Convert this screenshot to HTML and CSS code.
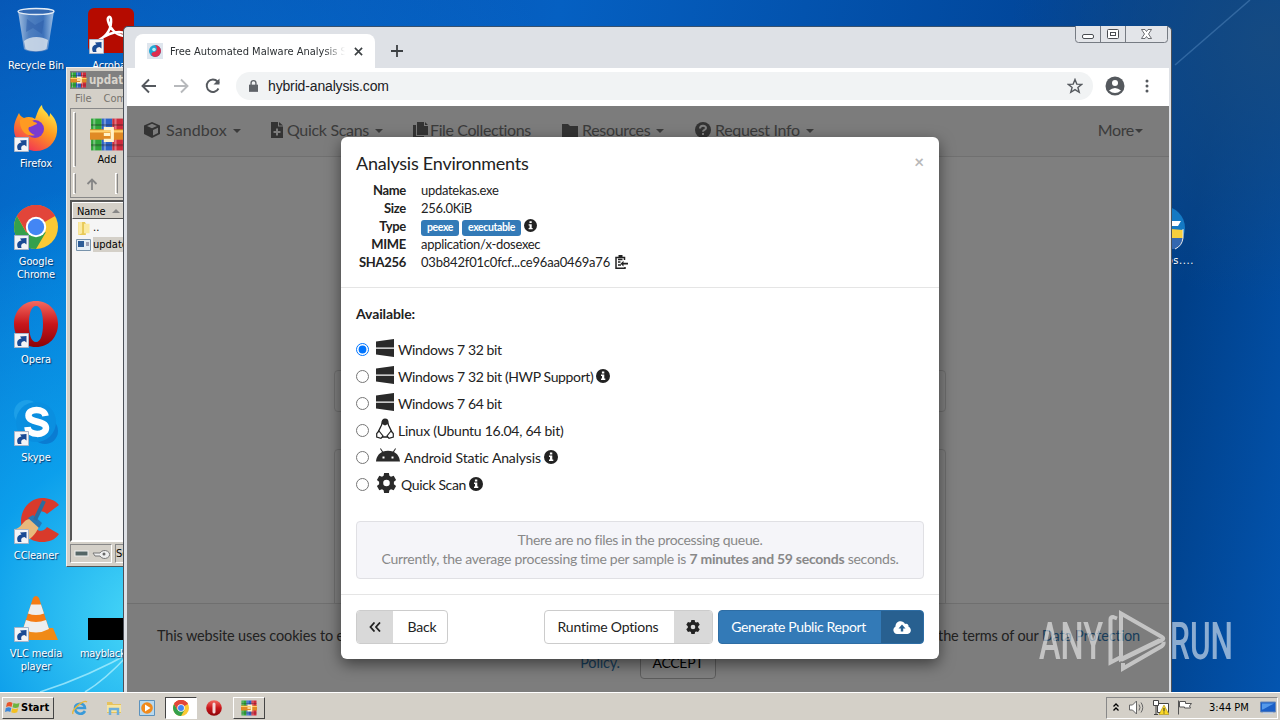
FILE: index.html
```html
<!DOCTYPE html>
<html lang="en">
<head>
  <meta charset="utf-8">
  <title>Free Automated Malware Analysis Service</title>
  <link rel="stylesheet" href="styles.css">
</head>
<body>
  <!-- shared icons -->
  <svg class="defs" width="0" height="0">
    <defs>
      <linearGradient id="g-fire" x1="0.8" y1="0" x2="0.2" y2="1"><stop offset="0" stop-color="#fff04a"/><stop offset=".45" stop-color="#ff9a1f"/><stop offset="1" stop-color="#f0265c"/></linearGradient>
      <linearGradient id="g-red" x1="0" y1="0" x2="0" y2="1"><stop offset="0" stop-color="#f46a60"/><stop offset=".5" stop-color="#c8161b"/><stop offset="1" stop-color="#8b0308"/></linearGradient>
      <linearGradient id="g-glass" x1="0" y1="0" x2="1" y2="0"><stop offset="0" stop-color="#bcd0e8"/><stop offset=".3" stop-color="#5d86c0"/><stop offset=".7" stop-color="#4776ba"/><stop offset="1" stop-color="#b8d2ee"/></linearGradient>
    </defs>
    <symbol id="shortcut" viewBox="0 0 15 15"><path fill="#f4f4f6" stroke="#a8b4c8" d="M.5.5h14v14H.5z"/><path fill="#1a4a94" d="M4 13C2 8.500 4 6 7.500 5.500L6 3.500 12.500 3v6.500L10.500 8C7.500 8.500 6.500 10 7.500 13z"/></symbol>
    <symbol id="windows" viewBox="0 0 18 18"><path d="M0 2.400 18 0v8.500H0zM0 9.700h18V18L0 15.600z"/></symbol>
    <symbol id="info" viewBox="0 0 14 14"><circle cx="7" cy="7" r="7"/><path fill="#fff" d="M5.900 2.400h2.400v2H5.900zM5 5.600h3.300v4h1v1.500H5V9.600h1V7H5z"/></symbol>
    <symbol id="gear" viewBox="0 0 20 20"><path fill-rule="evenodd" d="M7.600 0h4.800l.5 2.800 1.600.9L17.200 2.700l2.400 4.200-2.200 1.900v2.400l2.200 1.900-2.400 4.200-2.700-1-1.600.9-.5 2.800H7.600l-.5-2.800-1.600-.9-2.700 1-2.400-4.200 2.200-1.900V8.800L.4 6.900l2.400-4.200 2.700 1 1.600-.9zM10 6.700a3.300 3.300 0 1 0 0 6.600 3.300 3.300 0 0 0 0-6.600z"/></symbol>
    <symbol id="rar" viewBox="0 0 32 32"><path fill="#2fa53a" d="M1 1h10v30H1z"/><path fill="#2d63c8" d="M11 1h10v30H11z"/><path fill="#cf2a3c" d="M21 1h10v30H21z"/><path fill="#fff" opacity=".35" d="M3 1h2v30H3zM13 1h2v30h-2zM23 1h2v30h-2z"/><path fill="#222" opacity=".3" d="M1 6h30v2H1zM1 25h30v2H1z"/><path fill="#e08a25" d="M0 11h32v10H0z"/><path fill="#ffd06b" d="M0 12h32v2H0z"/><path fill="none" stroke="#fff2c8" stroke-width="3" d="M13 10.500h8v11h-8M13 16h6"/></symbol>
    <symbol id="chrome" viewBox="0 0 44 44"><circle cx="22" cy="22" r="22" fill="#fbc934"/><path fill="#e2453a" d="M22 22 3 11a22 22 0 0 1 38 0z"/><path fill="#34a04c" d="M3 11a22 22 0 0 0 19 33l10-17-10 4-10-4z"/><path fill="#e2453a" d="M3 11 12.500 27.500 22 11h19A22 22 0 0 0 3 11z"/><circle cx="22" cy="22" r="10.200" fill="#fff"/><circle cx="22" cy="22" r="8.200" fill="#4386f4"/></symbol>
    <symbol id="opera" viewBox="0 0 44 46"><path fill="url(#g-red)" fill-rule="evenodd" d="M22 0C9 0 0 10 0 23s9 23 22 23 22-10 22-23S35 0 22 0zm0 5c5 0 7 8 7 18s-2 18-7 18-7-8-7-18 2-18 7-18z"/></symbol>
  </svg>

  <div class="desktop">
    <svg class="rays" viewBox="0 0 1280 692">
      <path d="M40 692Q90 676 135 650M85 692Q105 680 128 655" stroke="#b9f3ff" stroke-width="1.500" opacity=".7"/>
      <path d="M1175 65 1250 0" stroke="#6fa2d8" stroke-width="1.500" opacity=".35"/>
    </svg>

    <div class="icons">
      <div class="icon">
        <svg viewBox="0 0 46 46"><path fill="url(#g-glass)" opacity=".85" d="M5 4h36l-6 38c-4 4-20 4-24 0z"/><path fill="#dfe6ee" opacity=".8" d="M11 34c6-5 17-5 24-1l-1.500 9c-5 3-16 3-21 0z"/><path fill="#2c5ca8" opacity=".5" d="M14 12l8 6 9-5-2 14-9-6-7 4z"/><ellipse cx="23" cy="4.500" rx="18" ry="3" fill="#3469b2" stroke="#e3ecf6" stroke-width="1.300"/></svg>
        <span>Recycle Bin</span>
      </div>
      <div class="icon">
        <svg viewBox="0 0 46 46"><path fill="url(#g-fire)" d="M1 24C1 17 4 12 6 8c1 3 3 4 5 5 4-2 9-1 11 1 2-4 3-11 7-14 0 5 5 6 7 12 1-1 1-3 1-4 5 5 8 11 7 19-1 11-10 19-21 19S1 36 1 24z"/><circle cx="22" cy="24" r="9" fill="#7a3bd0"/><path fill="#ff9a22" d="M7 15c5-3 11-2 14 2 2 0 3 1 3 2-4 1-5 3-8 3-2 3 2 7 6 8-9 3-16-6-15-15z"/></svg>
        <svg class="arrow"><use href="#shortcut"/></svg>
        <span>Firefox</span>
      </div>
      <div class="icon">
        <svg><use href="#chrome" x="1" y="2" width="44" height="44"/></svg>
        <svg class="arrow"><use href="#shortcut"/></svg>
        <span>Google Chrome</span>
      </div>
      <div class="icon">
        <svg><use href="#opera" x="1" width="44" height="46"/></svg>
        <svg class="arrow"><use href="#shortcut"/></svg>
        <span>Opera</span>
      </div>
      <div class="icon">
        <svg viewBox="0 0 46 46"><circle cx="14" cy="14" r="13" fill="#1c9fe8"/><circle cx="32" cy="32" r="13" fill="#0a7cd2"/><circle cx="23" cy="23" r="20" fill="#0a8fe0"/><path fill="none" stroke="#fff" stroke-width="6.500" d="M32.500 17c-1-8-17-8-17-.5 0 8 17.500 4.500 17.500 12.500 0 8-18 8-18.500-1"/></svg>
        <svg class="arrow"><use href="#shortcut"/></svg>
        <span>Skype</span>
      </div>
      <div class="icon">
        <svg viewBox="0 0 46 46"><path fill="#d93a2b" d="M46 8 34 17c-6-6-13-2-13 7 0 10 8 13 13 6l12 7c-4 6-10 8-17 8C16 45 8 36 8 24S17 1 29 1c7 0 13 2 17 7z"/><path fill="#e8b97c" d="M1 32c8 0 9-11 17-10l8 8c-4 8-9 13-15 15z"/><path fill="#2877b3" d="M15 21l5-3 9 8-3 5z"/><path stroke="#2b6c9e" stroke-width="4" d="M22 23 31 4"/></svg>
        <svg class="arrow"><use href="#shortcut"/></svg>
        <span>CCleaner</span>
      </div>
      <div class="icon">
        <svg viewBox="0 0 46 46"><path fill="#f08a17" d="M8 33h32l5 12H4z"/><path fill="#f57c14" d="M20 3q3-4 6 0l10 31q-13 7-26 0z"/><path fill="#eee" d="M18 9.500h10l3 9q-8 3-16 0zM13 25q10 4 20 0l3 9q-13 7-26 0z"/></svg>
        <svg class="arrow"><use href="#shortcut"/></svg>
        <span>VLC media player</span>
      </div>
    </div>

    <div class="icons second">
      <div class="icon">
        <svg viewBox="0 0 46 46"><rect y="1" width="46" height="45" rx="6" fill="#b50b00"/><path fill="none" stroke="#fff" stroke-width="2.500" d="M11 33c8-4 13-12 12-21-1-4-4-2-3 2 2 8 8 14 16 15 4-1 0-4-5-4-7 0-13 3-20 8z"/></svg>
        <svg class="arrow"><use href="#shortcut"/></svg>
        <span>Acrobat</span>
      </div>
      <div class="icon last">
        <div class="thumb"></div>
        <span>mayblack...</span>
      </div>
    </div>

    <div class="icon side">
      <svg viewBox="0 0 46 46"><circle cx="23" cy="23" r="22" fill="#1479c4"/><path fill="#fff" d="M30 16h11l-3 5h-8z"/><path fill="#f7cf3d" d="M31 24l12 1v8H31z"/><path fill="#3568b0" d="M31 33h12q-1 8-7 11h-5z"/><path fill="none" stroke="#e8e8e8" d="M43 24v9q-1 8-8 11"/></svg>
      <span>setups....</span>
    </div>

    <!-- archive window -->
    <div class="rar-window">
      <div class="rar-title"><svg><use href="#rar"/></svg><b>updatekas.zip</b></div>
      <div class="rar-menu"><span>File</span><span>Commands</span></div>
      <div class="rar-tools">
        <i class="grip"></i>
        <div class="rar-add"><svg><use href="#rar"/></svg><span>Add</span></div>
      </div>
      <div class="rar-nav">
        <i class="grip"></i>
        <svg viewBox="0 0 12 12"><path d="M6 12V1.500M1.500 6 6 1.500 10.500 6"/></svg>
        <i class="grip"></i>
      </div>
      <div class="rar-list">
        <div class="rar-head">Name <i></i></div>
        <div class="rar-row"><svg viewBox="0 0 15 15"><path fill="#e8c956" d="M2 1h7l1 2v12H2z"/><path fill="#faeaa2" d="M2 1h4v12l-4 2zM8 3h6v10H8z"/></svg><span>..</span></div>
        <div class="rar-row"><svg viewBox="0 0 15 12"><path fill="#e4edf5" stroke="#7893ab" d="M.5.500h14v11H.5z"/><path fill="#2d5d98" d="M2 2h6v6H2z"/><path stroke="#557" d="M10 4h3M10 6h3"/></svg><span class="picked">updatekas.exe</span></div>
      </div>
      <div class="rar-status">
        <div class="cell"><svg viewBox="0 0 36 12"><rect x="1" y="3" width="13" height="5" fill="#566" stroke="#eee"/><path fill="#eee" stroke="#777" d="M19 5h7a5 4 0 1 1 0 3h-5z"/><circle cx="30" cy="6" r="1.500" fill="#666"/></svg></div>
        <div class="cell text">Selected</div>
      </div>
    </div>

    <!-- browser window -->
    <div class="browser">
      <div class="win-buttons">
        <svg viewBox="0 0 93 17"><path fill="#e3e5e9" stroke="#767b83" d="M.5 0v13.500q0 3 3 3h86q3 0 3-3V0M25.500 0v16.500M50.500 0v16.500"/><rect x="7.500" y="8.500" width="11" height="4" rx="1.500" fill="#fff" stroke="#4a4d52"/><rect x="32.500" y="3.500" width="11" height="9" rx="1" fill="#fff" stroke="#4a4d52"/><rect x="35.500" y="6.500" width="5" height="3" fill="#fff" stroke="#4a4d52"/><path fill="#fff" stroke="#4a4d52" stroke-width=".8" d="M66.500 3.500h3.500l1.500 2 1.500-2h3.500L73.500 8l3 4.500H73l-1.500-2-1.500 2h-3.500l3-4.500z"/></svg>
      </div>
      <div class="tabs">
        <div class="tab">
          <svg class="favicon" viewBox="0 0 16 16"><path fill="#dfe6ee" d="M0 0h16v16H0z"/><circle cx="8" cy="8" r="6" fill="#21a7d4"/><path fill="#df2c4e" d="M8 2a6 6 0 0 1 0 12C3 13 4 9 7 9s4-4 1-7z"/><circle cx="7" cy="6.500" r="1.800" fill="#b8eef8"/></svg>
          <span>Free Automated Malware Analysis Service</span>
          <svg class="close" viewBox="0 0 10 10"><path d="m1 1 8 8M9 1 1 9"/></svg>
        </div>
        <svg class="plus" viewBox="0 0 12 12"><path d="M6 0v12M0 6h12"/></svg>
      </div>
      <div class="toolbar">
        <svg class="nav-icon" viewBox="0 0 16 16"><path d="M15 8H2M8 1.500 1.500 8 8 14.500"/></svg>
        <svg class="nav-icon off" viewBox="0 0 16 16"><path d="M1 8h13M8 1.500 14.500 8 8 14.500"/></svg>
        <svg class="nav-icon" viewBox="0 0 16 16"><path d="M13.500 10.500A6.200 6.200 0 1 1 12.500 3.500L14 5"/><path d="M14.500.500v6h-6z" class="solid"/></svg>
        <div class="address">
          <svg class="lock" viewBox="0 0 10 13"><path d="M0 5h10v8H0z"/><path fill="none" stroke="#5f6368" stroke-width="1.500" d="M2.300 5.500V3.300a2.700 2.700 0 0 1 5.400 0v2.200"/></svg>
          <span>hybrid-analysis.com</span>
          <svg class="star" viewBox="0 0 16 16"><path d="m8 1.500 1.800 4.600 4.900.300-3.800 3.100 1.300 4.800L8 11.600l-4.200 2.700 1.300-4.800-3.800-3.100 4.900-.300z"/></svg>
        </div>
        <svg class="user" viewBox="0 0 20 20"><circle cx="10" cy="10" r="9.500"/><circle cx="10" cy="7" r="3" fill="#fff"/><path fill="#fff" d="M4 14.500q6-5 12 0-6 5-12 0z"/></svg>
        <svg class="dots" viewBox="0 0 4 14"><circle cx="2" cy="2" r="1.500"/><circle cx="2" cy="7" r="1.500"/><circle cx="2" cy="12" r="1.500"/></svg>
      </div>

      <div class="page">
        <div class="navbar">
          <div class="nav-item sandbox"><svg viewBox="0 0 16 16"><path fill-rule="evenodd" d="m8 0 8 3.500v8.500l-8 4-8-4V3.500zM8 1.800 3 4l5 2.200L13 4zM9 8v5.600l5-2.500V5.700z"/></svg><span>Sandbox</span><i></i></div>
          <div class="nav-item scans"><svg viewBox="0 0 12 16"><path fill-rule="evenodd" d="M0 0h7v4.500h5V16H0zM8 0l4 3.500H8zM5 6.500V9H2.500v2H5v2.500h2V11h2.500V9H7V6.500z"/></svg><span>Quick Scans</span><i></i></div>
          <div class="nav-item files"><svg viewBox="0 0 15 16"><path d="M4 0h7v4h4v9H4zM12 0l3 3h-3zM0 3h3v11h8v2H0z"/></svg><span>File Collections</span></div>
          <div class="nav-item resources"><svg viewBox="0 0 16 14"><path d="M0 1h6l2 2h8v11H0z"/></svg><span>Resources</span><i></i></div>
          <div class="nav-item request"><svg viewBox="0 0 16 16"><circle cx="8" cy="8" r="8"/><path fill="none" stroke="#fff" stroke-width="2" d="M5 6.500c0-3.500 6-3.500 6-.5 0 2-3 1.700-3 3.700M8 11v2"/></svg><span>Request Info</span><i></i></div>
          <div class="nav-item more"><span>More</span><i></i></div>
        </div>
        <div class="content">
          <div class="panel small"></div>
          <div class="panel"></div>
        </div>
        <div class="cookies">
          <div class="cookie-text"><span>This website uses cookies to enhance your browsing experience.</span><span class="terms">the terms of our <a>Data Protection</a></span></div>
          <div class="cookie-action"><a>Policy.</a><button>ACCEPT</button></div>
        </div>

        <div class="backdrop">
          <div class="modal">
            <div class="modal-header">
              <div class="title-row"><h4>Analysis Environments</h4><span class="x">×</span></div>
              <dl>
                <dt>Name</dt><dd>updatekas.exe</dd>
                <dt>Size</dt><dd>256.0KiB</dd>
                <dt>Type</dt><dd><span class="label">peexe</span><span class="label">executable</span><svg class="info"><use href="#info"/></svg></dd>
                <dt>MIME</dt><dd>application/x-dosexec</dd>
                <dt>SHA256</dt><dd class="hash">03b842f01c0fcf...ce96aa0469a76 <svg class="clip" viewBox="0 0 13 14"><path fill="none" stroke="#222" stroke-width="1.500" d="M9.500 5V2.500H1v10.700h9V12M3 4.500h4.500M3 7h2.500M3 10h3"/><path fill="#222" d="M3.500 0h4v3h-4zM13 7.800v1.700H8.500v2L5.500 8.700l3-2.900v2z"/></svg></dd>
              </dl>
            </div>
            <div class="modal-body">
              <b class="available">Available:</b>
              <label><input type="radio" name="env" checked><svg class="win"><use href="#windows"/></svg><span>Windows 7 32 bit</span></label>
              <label><input type="radio" name="env"><svg class="win"><use href="#windows"/></svg><span>Windows 7 32 bit (HWP Support)</span><svg class="info"><use href="#info"/></svg></label>
              <label><input type="radio" name="env"><svg class="win"><use href="#windows"/></svg><span>Windows 7 64 bit</span></label>
              <label class="linux"><input type="radio" name="env"><svg class="win tux" viewBox="0 0 18 21"><path fill="#fff" stroke="#222" stroke-width="1.300" d="M6 5c0-5 6-5 6 0 0 4 4 6 4 11l-3 3H5l-3-3c0-5 4-7 4-11z"/><path d="M6 3.500C6 .5 12 .5 12 3.500V6L9 7.500 6 6z"/><path fill="#fff" stroke="#222" stroke-width="1.200" d="m3 13 4 5-2 2.300-4.300-1.200V15.500zM15 13l-4 5 2 2.300 4.300-1.200V15.500z"/></svg><span>Linux (Ubuntu 16.04, 64 bit)</span></label>
              <label class="android"><input type="radio" name="env"><svg class="droid" viewBox="0 0 24 14"><path fill-rule="evenodd" d="M0 13.500C.5 8.500 3 5.500 6 4L4 .7l.8-.5 2.200 3.400q5-1.800 10 0L19.200.2l.8.5L18 4c3 1.500 5.500 4.500 6 9.500zM6.500 8.500v2h2v-2zM15.500 8.500v2h2v-2z"/></svg><span>Android Static Analysis</span><svg class="info"><use href="#info"/></svg></label>
              <label><input type="radio" name="env"><svg class="cog"><use href="#gear"/></svg><span>Quick Scan</span><svg class="info"><use href="#info"/></svg></label>
              <div class="well">
                <p>There are no files in the processing queue.</p>
                <p>Currently, the average processing time per sample is <b>7 minutes and 59 seconds</b> seconds.</p>
              </div>
            </div>
            <div class="modal-footer">
              <div class="btn back"><i><svg viewBox="0 0 12 10"><path d="M5.500.500 1.500 5l4 4.500M11 .5 7 5l4 4.500"/></svg></i><span>Back</span></div>
              <div class="btn options"><span>Runtime Options</span><i><svg><use href="#gear"/></svg></i></div>
              <div class="btn primary"><span>Generate Public Report</span><i><svg viewBox="0 0 18 13"><path fill-rule="evenodd" d="M4 13a4 4 0 0 1-1.500-7.500C2.500-.5 10-1.500 12 3c2-1 4 .5 3.500 2.700C19 7 18.500 13 14.500 13zM9 3.500l-3.500 4h2.300v3h2.400v-3h2.300z"/></svg></i></div>
            </div>
          </div>
        </div>
      </div>
    </div>
  </div>

  <div class="taskbar">
    <div class="start"><svg viewBox="0 0 15 15"><path fill="#e8552b" d="M2 3q3-2 5.500 0L6.500 7Q4 5.500 1 7z"/><path fill="#6eb43f" d="M8.500 3q3 1.500 6 0l-1 4.200q-3 1.500-6 0z"/><path fill="#3a86d8" d="M.8 8q3-1.500 5.500 0l-1 4Q3 10.500 0 12z"/><path fill="#f3c021" d="M7.200 8.200q3 1.500 6 0l-1 4q-3 1.500-6 0z"/></svg><b>Start</b></div>
    <div class="task"><svg viewBox="0 0 16 16"><path fill="none" stroke="#3a9ad9" stroke-width="2.600" d="M13 11c-3 5-10 2.500-10-3S13 2 13 8H4"/><path fill="none" stroke="#e8b73a" stroke-width="1.400" d="M1 14C-1 10 12-1 15 2"/></svg></div>
    <div class="task"><svg viewBox="0 0 16 16"><path fill="#e6c25c" d="M1 2h5l1 2h8v9H1z"/><path fill="#f8e6a0" d="M1 5h14v7H1z"/><path fill="none" stroke="#6daedb" stroke-width="2.500" d="M4 15V9h8v6"/></svg></div>
    <div class="task"><svg viewBox="0 0 16 16"><path fill="#b9d9ee" stroke="#5c92bd" d="M.5.500h15v15H.5z"/><circle cx="8" cy="8" r="5.800" fill="#f18a1c"/><path fill="#fff" d="m6 4.500 5.500 3.500L6 11.500z"/></svg></div>
    <div class="task active"><svg><use href="#chrome"/></svg></div>
    <div class="task"><svg viewBox="0 0 16 16"><circle cx="8" cy="8" r="7.800" fill="url(#g-red)"/><rect x="6.500" y="2.500" width="3" height="11" rx="1.500" fill="#f4d8d8"/></svg></div>
    <div class="task raised"><svg><use href="#rar"/></svg></div>
    <div class="tray">
      <svg class="chev" viewBox="0 0 6 9"><path d="M.5 3.500 3 1l2.500 2.500M.5 7.500 3 5l2.500 2.500"/></svg>
      <svg viewBox="0 0 16 14"><path fill="#fff" stroke="#666" d="M.5 4.500h3l4-4v13l-4-4h-3z"/><path fill="none" stroke="#666" d="M10 4q2 3 0 6M12 2q3.500 5 0 10"/></svg>
      <svg viewBox="0 0 16 15"><path fill="#fff" stroke="#444" d="M4.500 3.500h11v9h-11z"/><path fill="#fff" stroke="#444" d="M.5.500h5v5h-5zM3 5.500v9M1 14.500h4"/><path fill="#fbd825" stroke="#a68b10" stroke-width=".6" d="m11 5 5 9.500H6z"/><path stroke="#222" d="M11 8v3.500M11 12.500v1"/></svg>
      <svg viewBox="0 0 16 15"><path fill="#fff" stroke="#555" d="M1.500 14.500V.500M2.500 1.500h6v2h6l-2 2.500 1 2h-6v-1h-5z"/></svg>
      <span>3:44 PM</span>
      <svg viewBox="0 0 16 14"><path fill="#1b5fc6" stroke="#6888b8" d="M.5 1.500h15v10H.5z"/><path fill="#5599ea" d="M2 3h12L3 9H2z"/><path fill="#c9d4e2" d="M3 12h10v1.500H3z"/></svg>
    </div>
  </div>

  <svg class="watermark" viewBox="0 0 192 62">
    <text x="0" y="49" textLength="64" lengthAdjust="spacingAndGlyphs">ANY</text>
    <path d="M78 8.500 74 7q-2.500 0-2.500 2.500v43L84 46M82 42V3.500l41 23.500q2.500 1.500 0 3L82 50M82 15v34L121 30M84 53v5.500l39-22.500q2-1.500 1.500-4"/>
    <text x="131" y="49" textLength="63" lengthAdjust="spacingAndGlyphs">RUN</text>
  </svg>
</body>
</html>
```
FILE: styles.css
```css
* {
  box-sizing: border-box;
}

body {
  margin: 0;
  width: 1280px;
  height: 720px;
  overflow: hidden;
  font-family: "DejaVu Sans Condensed", "DejaVu Sans", sans-serif;
  font-size: 11px;
  position: relative;
}

.defs {
  position: absolute;
}

.desktop {
  position: relative;
  height: 692px;
  overflow: hidden;
  background:
    radial-gradient(circle 440px at 150px 620px, #4adaf8 0%, rgba(12, 165, 240, .9) 40%, rgba(0, 120, 220, 0) 100%),
    radial-gradient(circle 520px at 100px 300px, rgba(0, 130, 225, .8), rgba(0, 110, 210, 0)),
    radial-gradient(circle 260px at 1270px 40px, #154a82, rgba(10, 70, 135, 0)),
    linear-gradient(100deg, #0a45a4 0%, #0560c2 40%, #01469a 75%, #003f88 88%, #0355b0 100%);
}

.rays {
  position: absolute;
  inset: 0;
  fill: none;
}

/* desktop icons */
.icons {
  position: absolute;
  left: 0;
  top: 7px;
  width: 72px;
  display: grid;
  grid-auto-rows: 98px;
}
.icons.second {
  left: 75px;
}
.icon {
  position: relative;
  display: flex;
  flex-direction: column;
  align-items: center;
  color: #fff;
  text-align: center;
  line-height: 12.500px;
  text-shadow: 1px 1px 1px #0a3468;
}
.icon > svg {
  width: 46px;
  height: 46px;
  margin-bottom: 7px;
  flex: none;
}
.icon span {
  width: 62px;
  letter-spacing: -.1px;
}
.icon > .arrow {
  position: absolute;
  left: 14px;
  top: 32px;
  width: 15px;
  height: 15px;
}
.icon.last {
  grid-row: 7;
  align-items: flex-start;
  padding-left: 5px;
}
.icon.last span {
  text-align: left;
  letter-spacing: -.3px;
}
.thumb {
  width: 46px;
  height: 22px;
  margin: 23px 8px 8px;
  background: #000;
}
.icon.side {
  position: absolute;
  left: 1118px;
  top: 205px;
  width: 90px;
}
.icon.side > svg {
  margin-bottom: 4px;
}
.icon.side span {
  text-align: right;
  letter-spacing: .6px;
}

/* archive window */
.rar-window {
  position: absolute;
  left: 66px;
  top: 67px;
  width: 220px;
  height: 500px;
  padding: 3px;
  background: #d4d0c8;
  border: 1px solid #eee;
  border-bottom-color: #555;
  display: flex;
  flex-direction: column;
}
.rar-title {
  height: 18px;
  background: #808080;
  color: #d8d4cc;
  display: flex;
  align-items: center;
  gap: 2px;
  font-size: 11.500px;
}
.rar-title svg {
  width: 17px;
  height: 16px;
}
.rar-menu {
  height: 19px;
  display: flex;
  align-items: center;
  gap: 12px;
  padding-left: 5px;
  color: #77736d;
}
.rar-tools {
  height: 62px;
  display: flex;
  border: 1px solid #888;
  border-width: 1px 0 0 1px;
  padding: 3px 2px;
}
.grip {
  width: 3px;
  border: 1px solid #fff;
  border-right-color: #888;
}
.rar-add {
  display: flex;
  flex-direction: column;
  align-items: center;
  margin: 5px 0 0 14px;
  gap: 1px;
}
.rar-add svg {
  width: 34px;
  height: 35px;
}
.rar-nav {
  height: 28px;
  border-left: 1px solid #888;
  border-bottom: 1px solid #888;
  display: flex;
  padding: 3px 2px;
  gap: 10px;
}
.rar-nav svg {
  width: 12px;
  height: 12px;
  margin: 5px 7px 0 0;
  fill: none;
  stroke: #858585;
  stroke-width: 1.800;
}
.rar-list {
  flex: 1;
  margin-top: 2px;
  border: 2px solid #555;
  border-bottom-color: #fff;
  background: #f5f5f5;
}
.rar-head {
  height: 17px;
  background: #d4d0c8;
  border: 1px solid #fff;
  border-bottom-color: #555;
  padding-left: 4px;
  line-height: 17px;
  letter-spacing: -.2px;
}
.rar-head i {
  display: inline-block;
  border: 4px solid transparent;
  border-top: 0;
  border-bottom-color: #888;
  margin: 0 0 2px 4px;
}
.rar-row {
  height: 17px;
  display: flex;
  align-items: center;
  gap: 2px;
  padding-left: 4px;
}
.rar-row svg {
  width: 15px;
  height: 14px;
}
.picked {
  background: #d4d0c8;
  line-height: 15px;
}
.rar-status {
  height: 21px;
  display: flex;
  gap: 3px;
  padding-top: 2px;
}
.cell {
  width: 42px;
  padding: 3px;
  border: 1px solid #888;
  border-right-color: #fff;
  border-bottom-color: #fff;
}
.cell.text {
  flex: 1;
  padding: 2px 0;
}
.cell svg {
  width: 36px;
  height: 12px;
}

/* browser window */
.browser {
  position: absolute;
  left: 123px;
  top: 26px;
  width: 1049px;
  height: 668px;
  background: #dee1e6;
  border: 1px solid #4c5159;
  border-top-color: #36516f;
  border-radius: 5px 5px 0 0;
  padding: 0 2px 0 3px;
  display: flex;
  flex-direction: column;
}
.win-buttons {
  position: absolute;
  right: 3px;
  top: -1px;
}
.win-buttons svg {
  width: 93px;
  height: 17px;
}
.tabs {
  height: 41px;
  flex: none;
  padding: 7px 0 0 8px;
  display: flex;
  align-items: center;
  gap: 16px;
}
.tab {
  width: 240px;
  height: 34px;
  background: #fff;
  border-radius: 8px 8px 0 0;
  padding: 0 12px 0 12px;
  display: flex;
  align-items: center;
  color: #2c3033;
}
.favicon {
  width: 16px;
  height: 16px;
  flex: none;
}
.tab span {
  width: 176px;
  margin: 0 9px 0 7px;
  overflow: hidden;
  white-space: nowrap;
  font-size: 11px;
  -webkit-mask-image: linear-gradient(to right, #000 88%, transparent);
  mask-image: linear-gradient(to right, #000 88%, transparent);
}
.close {
  width: 9px;
  height: 9px;
  flex: none;
}
.close path,
.plus path {
  stroke: #3c4043;
  stroke-width: 1.800;
}
.plus {
  width: 12px;
  height: 12px;
  margin-bottom: 1px;
}
.toolbar {
  height: 38px;
  flex: none;
  background: #fff;
  display: flex;
  align-items: center;
  padding: 0 20px 2px 14px;
}
.nav-icon {
  width: 16px;
  height: 16px;
  margin-right: 16px;
  fill: none;
  stroke: #55595e;
  stroke-width: 1.900;
}
.nav-icon.off {
  stroke: #b7b9bc;
}
.nav-icon .solid {
  fill: #55595e;
  stroke: none;
}
.address {
  width: 857px;
  height: 28px;
  margin: 0 12px 0 -1px;
  border-radius: 14px;
  background: #f1f3f4;
  display: flex;
  align-items: center;
  padding: 0 10px 0 13px;
  color: #202124;
  font-family: "Liberation Sans", sans-serif;
  font-size: 14px;
  letter-spacing: -.15px;
}
.lock {
  width: 9px;
  height: 12px;
  margin-right: 10px;
  fill: #5f6368;
}
.star {
  width: 16px;
  height: 16px;
  margin-left: auto;
  fill: none;
  stroke: #55595e;
  stroke-width: 1.400;
}
.user {
  width: 20px;
  height: 20px;
  fill: #55595e;
}
.dots {
  width: 4px;
  height: 14px;
  margin-left: auto;
  fill: #55595e;
}

/* site behind the dialog */
.page {
  position: relative;
  flex: 1;
  min-height: 0;
  background: #fff;
  font-family: Lato, sans-serif;
  display: flex;
  flex-direction: column;
}
.navbar {
  height: 51px;
  flex: none;
  background: #f8f8f8;
  border-bottom: 1px solid #e0e0e0;
  display: flex;
  align-items: center;
  padding: 0 0 3px 17px;
  color: #777;
  font-size: 16px;
  letter-spacing: -.32px;
}
.nav-item {
  display: flex;
  align-items: center;
  white-space: nowrap;
  flex: none;
}
.nav-item svg {
  width: 16px;
  height: 16px;
  fill: #666;
  margin-right: 6px;
}
.nav-item i {
  border: 4px solid transparent;
  border-top-color: #777;
  border-bottom: 0;
  margin: 3px 0 0 6px;
}
.sandbox { width: 127px; letter-spacing: .1px; }
.scans { width: 142px; }
.scans svg { width: 12px; margin-right: 4px; }
.files { width: 149px; letter-spacing: -.38px; }
.files svg { width: 15px; margin-right: 2px; }
.resources { width: 133px; }
.resources svg { height: 14px; margin-right: 4px; }
.request svg { margin-right: 4px; }
.more { margin-left: auto; margin-right: 26px; }
.more i { margin-left: 1px; }
.content {
  flex: 1;
  min-height: 0;
  overflow: hidden;
  padding: 213px 223px 0 207px;
}
.panel {
  height: 160px;
  border: 1px solid #ddd;
  border-radius: 4px;
}
.panel.small {
  height: 42px;
  margin-bottom: 37px;
}
.cookies {
  height: 90px;
  flex: none;
  background: #fafafa;
  border-top: 1px solid #dedede;
  color: #444;
  font-size: 14.500px;
  letter-spacing: -.15px;
  padding: 23px 29px 0 30px;
}
.cookies a {
  color: #337ab7;
}
.cookie-text {
  height: 18px;
  display: flex;
  justify-content: space-between;
}
.cookie-action {
  display: flex;
  align-items: center;
  justify-content: center;
  gap: 20px;
  padding-right: 1px;
}
.cookie-action button {
  width: 76px;
  height: 34px;
  border: 1px solid #bbb;
  border-radius: 4px;
  background: #fff;
  font: 14px Lato, sans-serif;
  letter-spacing: -.3px;
}

/* dialog */
.backdrop {
  position: absolute;
  inset: 0;
  background: rgba(0, 0, 0, .5);
  padding: 31px 0 0 214px;
}
.modal {
  width: 598px;
  height: 522px;
  background: #fff;
  border-radius: 6px;
  box-shadow: 0 5px 15px rgba(0, 0, 0, .5);
  color: #222;
  font-size: 14px;
}
.modal-header {
  height: 151px;
  padding: 14px 15px 0;
  border-bottom: 1px solid #e5e5e5;
}
.title-row {
  display: flex;
  justify-content: space-between;
}
h4 {
  margin: 0;
  font-size: 18px;
  font-weight: 400;
  line-height: 24px;
  letter-spacing: -.24px;
}
.x {
  color: #b8b8b8;
  font-size: 17px;
  font-weight: 700;
  line-height: 21px;
}
dl {
  margin: 6px 0 0;
  display: grid;
  grid-template-columns: 50px 1fr;
  column-gap: 15px;
  grid-auto-rows: 18px;
  line-height: 18px;
  font-size: 13px;
  letter-spacing: -.29px;
}
dt {
  text-align: right;
  font-weight: 700;
}
dd {
  margin: 0;
  display: flex;
  align-items: center;
  white-space: nowrap;
}
.hash {
  letter-spacing: -.2px;
}
.label {
  height: 16px;
  margin: 3px 3px 0 0;
  padding: 0 6px;
  border-radius: 3px;
  background: #337ab7;
  color: #fff;
  font-size: 10.500px;
  font-weight: 700;
  line-height: 15px;
  letter-spacing: -.38px;
}
.info {
  width: 14px;
  height: 14px;
  margin: 0 0 1px 3px;
  fill: #222;
}
dd .info {
  width: 13px;
  height: 13px;
  margin-left: 0;
}
.clip {
  width: 13px;
  height: 14px;
  margin-left: 5px;
}
.modal-body {
  height: 307px;
  padding: 14px 15px;
  border-bottom: 1px solid #e5e5e5;
}
.available {
  display: block;
  height: 34px;
  line-height: 23px;
  letter-spacing: -.1px;
}
label {
  height: 27px;
  display: flex;
  align-items: center;
  letter-spacing: -.37px;
}
label svg {
  fill: #2a2a2a;
}
label.linux {
  letter-spacing: -.26px;
}
label.android {
  letter-spacing: -.14px;
}
label input {
  width: 13px;
  height: 13px;
  margin: 0 7px 0 0;
}
.win {
  width: 18px;
  height: 18px;
  margin: 0 4px 4px 0;
}
.tux {
  height: 21px;
}
.droid {
  width: 24px;
  height: 14px;
  margin: 0 4px 5px 0;
}
.cog {
  width: 21px;
  height: 20px;
  margin: 0 4px 4px 0;
}
.well {
  height: 58px;
  margin-top: 23px;
  border: 1px solid #e0e0e4;
  border-radius: 4px;
  background: #f5f5f9;
  color: #888;
  padding: 8px 0;
  text-align: center;
  letter-spacing: -.26px;
}
.well p {
  margin: 0;
  line-height: 19px;
}
.well p:first-child {
  letter-spacing: -.32px;
}
.modal-footer {
  display: flex;
  padding: 15px;
  gap: 5px;
}
.btn {
  height: 34px;
  border: 1px solid #ccc;
  border-radius: 4px;
  display: flex;
  overflow: hidden;
  line-height: 32px;
  white-space: nowrap;
  letter-spacing: -.2px;
}
.btn span {
  flex: 1;
  text-align: center;
}
.btn i {
  width: 38px;
  background: #d9d9d9;
  display: flex;
  align-items: center;
  justify-content: center;
}
.btn svg {
  width: 14px;
  height: 14px;
  fill: #222;
}
.back {
  width: 92px;
  margin-right: auto;
}
.back i {
  width: 36px;
}
.back span {
  padding-left: 4px;
}
.back svg {
  width: 12px;
  height: 10px;
  fill: none;
  stroke: #222;
  stroke-width: 1.800;
}
.options {
  width: 169px;
}
.options span {
  padding-right: 3px;
}
.primary {
  width: 206px;
  background: #337ab7;
  border-color: #2e6da4;
  color: #fff;
  letter-spacing: -.38px;
}
.primary span {
  padding-right: 3px;
}
.primary i {
  width: 42px;
  background: #286090;
}
.primary svg {
  width: 18px;
  height: 13px;
  fill: #fff;
}

/* taskbar */
.taskbar {
  height: 28px;
  position: relative;
  background: #d4d0c8;
  border-top: 1px solid #fff;
  display: flex;
  align-items: center;
  padding: 2px 2px 0;
}
.start {
  width: 52px;
  height: 22px;
  margin-right: 10px;
  border: 1px solid #fff;
  border-right-color: #444;
  border-bottom-color: #444;
  display: flex;
  align-items: center;
  padding-left: 2px;
  gap: 1px;
}
.start svg {
  width: 15px;
  height: 15px;
}
.task {
  width: 32px;
  height: 22px;
  margin-right: 1.500px;
  display: flex;
  align-items: center;
  justify-content: center;
}
.task svg {
  width: 16px;
  height: 16px;
}
.active {
  background: #fff;
  border: 1px solid #444;
  border-right-color: #fff;
  border-bottom-color: #fff;
}
.raised {
  margin-left: 1.500px;
  border: 1px solid #fff;
  border-right-color: #444;
  border-bottom-color: #444;
}
.tray {
  width: 172px;
  height: 22px;
  margin-left: auto;
  border: 1px solid #888;
  border-right-color: #fff;
  border-bottom-color: #fff;
  display: flex;
  align-items: center;
  gap: 8px;
  padding: 0 1px 0 6px;
}
.tray svg {
  width: 16px;
  height: 15px;
  flex: none;
}
.tray span {
  margin: 0 3px 0 8px;
  white-space: nowrap;
}
.tray .chev {
  width: 6px;
  height: 9px;
  margin-right: 2px;
  fill: none;
  stroke: #000;
  stroke-width: 1.300;
}

.watermark {
  position: absolute;
  left: 1039px;
  top: 610px;
  width: 192px;
  height: 62px;
  fill: #fff;
  opacity: .55;
  overflow: visible;
}
.watermark text {
  font-family: Roboto, sans-serif;
  font-size: 51px;
  font-weight: 500;
}
.watermark path {
  fill: none;
  stroke: #fff;
  stroke-width: 4;
}
```
